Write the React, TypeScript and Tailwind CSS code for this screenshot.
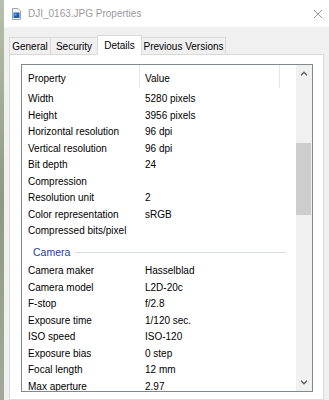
import React from "react";

type Row = { name: string; value?: string };

const imageRows: Row[] = [
  { name: "Width", value: "5280 pixels" },
  { name: "Height", value: "3956 pixels" },
  { name: "Horizontal resolution", value: "96 dpi" },
  { name: "Vertical resolution", value: "96 dpi" },
  { name: "Bit depth", value: "24" },
  { name: "Compression" },
  { name: "Resolution unit", value: "2" },
  { name: "Color representation", value: "sRGB" },
  { name: "Compressed bits/pixel" },
];

const cameraRows: Row[] = [
  { name: "Camera maker", value: "Hasselblad" },
  { name: "Camera model", value: "L2D-20c" },
  { name: "F-stop", value: "f/2.8" },
  { name: "Exposure time", value: "1/120 sec." },
  { name: "ISO speed", value: "ISO-120" },
  { name: "Exposure bias", value: "0 step" },
  { name: "Focal length", value: "12 mm" },
  { name: "Max aperture", value: "2.97" },
];

function PropRow({ row }: { row: Row }) {
  return (
    <div className="flex h-[16.5px] shrink-0 items-center leading-none">
      <span className="w-[123px] pl-[6px] whitespace-nowrap">{row.name}</span>
      <span className="whitespace-nowrap">{row.value ?? ""}</span>
    </div>
  );
}

function Chevron({ up }: { up?: boolean }) {
  return (
    <svg width="8" height="5" viewBox="0 0 8 5" className="block">
      <path
        d={up ? "M1 4.2 L4 1.2 L7 4.2" : "M1 0.8 L4 3.8 L7 0.8"}
        fill="none"
        stroke="#606060"
        strokeWidth="1.4"
      />
    </svg>
  );
}

export default function App() {
  return (
    <div className="flex h-[400px] w-[329px] overflow-hidden bg-[#f0f0f0] font-['Liberation_Sans',Arial,sans-serif] text-[10px] text-black">
      {/* desktop behind the window */}
      <div className="w-[4px] shrink-0 bg-gradient-to-b from-[#b8bfae] via-[#8d9a7c] to-[#a3a89a]" />

      <div className="flex min-w-0 flex-1 flex-col">
        {/* title bar */}
        <div className="flex h-[27px] shrink-0 items-center bg-white">
          <svg width="9" height="12" viewBox="0 0 9 12" className="ml-[8px] mt-px">
            <path d="M0.5 0.5 H6 L8.5 3 V11.5 H0.5 Z" fill="#f4f6f8" stroke="#9aa4ae" />
            <rect x="1.5" y="4.5" width="6" height="5.5" fill="#1f5fb4" />
            <rect x="2.5" y="5.5" width="2" height="2" fill="#6fb0ee" />
          </svg>
          <span className="ml-[7px] text-[10px] text-[#9a9a9a]">DJI_0163.JPG Properties</span>
          <svg width="10" height="10" viewBox="0 0 10 10" className="ml-auto mr-[6px]">
            <path d="M1 1 L9 9 M9 1 L1 9" stroke="#8a8a8a" strokeWidth="0.9" />
          </svg>
        </div>

        {/* tabs */}
        <div className="mt-[8px] flex h-[19px] shrink-0 items-end pl-[5px]">
          <div className="flex h-[17px] w-[42px] items-center justify-center border border-b-0 border-[#d9d9d9]">General</div>
          <div className="-ml-px flex h-[17px] w-[48px] items-center justify-center border border-b-0 border-[#d9d9d9]">Security</div>
          <div className="relative z-10 -mb-px -ml-px flex h-[20px] w-[45px] items-center justify-center border border-b-0 border-[#d9d9d9] bg-white">
            Details
          </div>
          <div className="-ml-px flex h-[17px] w-[85px] items-center justify-center border border-b-0 border-[#d9d9d9]">Previous Versions</div>
        </div>

        {/* tab panel */}
        <div className="ml-[5px] mr-[5px] flex flex-1 flex-col border border-[#d9d9d9] bg-white pl-[11px] pr-[10px] pt-[9px]">
          <div className="flex h-[328px] shrink-0 border border-[#828790]">
            <div className="flex min-w-0 flex-1 flex-col overflow-hidden">
              {/* column header */}
              <div className="flex h-[26px] shrink-0 items-start leading-none">
                <span className="w-[117px] pl-[6px] pt-[9px]">Property</span>
                <span className="h-[23px] w-px bg-[#e5e5e5]" />
                <span className="w-[139px] pl-[5px] pt-[9px]">Value</span>
                <span className="h-[23px] w-px bg-[#e5e5e5]" />
              </div>

              {imageRows.map((r) => (
                <PropRow key={r.name} row={r} />
              ))}

              {/* group header */}
              <div className="flex h-[23.5px] shrink-0 items-center pl-[11px] pr-[10px] pt-[2px]">
                <span className="text-[10.5px] leading-none text-[#1f3f9c]">Camera</span>
                <span className="ml-[5px] h-px flex-1 bg-[#d8dde8]" />
              </div>

              {cameraRows.map((r) => (
                <PropRow key={r.name} row={r} />
              ))}
            </div>

            {/* vertical scrollbar */}
            <div className="flex w-[16px] shrink-0 flex-col bg-[#f0f0f0]">
              <div className="flex h-[16px] items-center justify-center pt-[1px]">
                <Chevron up />
              </div>
              <div className="mt-[62px] h-[72px] w-[15px] bg-[#cdcdcd]" />
              <div className="mt-auto flex h-[16px] items-center justify-center pb-[1px]">
                <Chevron />
              </div>
            </div>
          </div>
        </div>
      </div>
    </div>
  );
}
